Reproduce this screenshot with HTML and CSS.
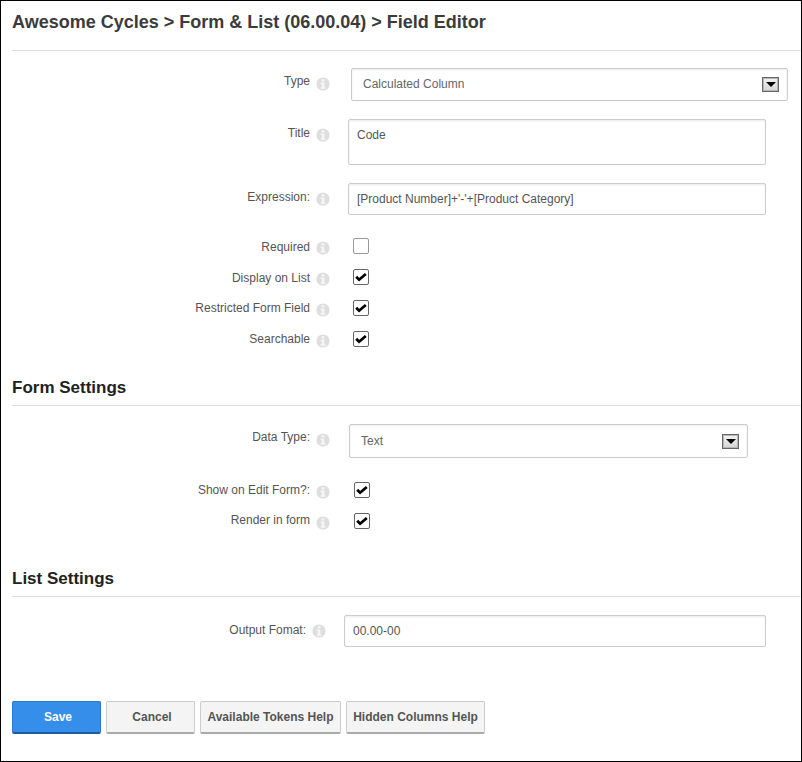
FILE: index.html
```html
<!DOCTYPE html>
<html lang="en">
<head>
    <meta charset="UTF-8">
    <meta name="viewport" content="width=device-width, initial-scale=1.0">
    <title>Field Editor</title>
    <link rel="stylesheet" href="styles.css">
</head>
<body>
    <svg class="sprites" width="0" height="0">
        <symbol id="info" viewBox="0 0 14 14">
            <circle cx="7" cy="7" r="6.6" fill="#dedede"/>
            <rect x="5.6" y="2.2" width="2.8" height="2.3" fill="#f6f6f6"/>
            <path d="M4.6 5.5h3.8v4.7h1.1v1.6H4.6v-1.6h1.1V7.1H4.6z" fill="#f6f6f6"/>
        </symbol>
        <symbol id="tick" viewBox="0 0 12 10">
            <path d="M1.2 4.8l2.9 2.9L10.8 2" fill="none" stroke="#000" stroke-width="2.8"/>
        </symbol>
    </svg>

    <div class="frame">
        <h1 class="page-title">Awesome Cycles &gt; Form &amp; List (06.00.04) &gt; Field Editor</h1>

        <div class="group group-main">
            <div class="row row-input">
                <label class="row-label">Type</label>
                <svg class="info"><use href="#info"/></svg>
                <div class="select select-type">Calculated Column<span class="arrow"></span></div>
            </div>
            <div class="row row-input row-title">
                <label class="row-label">Title</label>
                <svg class="info"><use href="#info"/></svg>
                <textarea class="field field-title">Code</textarea>
            </div>
            <div class="row row-input row-expression">
                <label class="row-label">Expression:</label>
                <svg class="info"><use href="#info"/></svg>
                <input class="field field-expression" type="text" value="[Product Number]+'-'+[Product Category]">
            </div>
            <div class="row row-check row-first">
                <label class="row-label">Required</label>
                <svg class="info"><use href="#info"/></svg>
                <span class="check"></span>
            </div>
            <div class="row row-check row-display">
                <label class="row-label">Display on List</label>
                <svg class="info"><use href="#info"/></svg>
                <span class="check"><svg class="tick"><use href="#tick"/></svg></span>
            </div>
            <div class="row row-check">
                <label class="row-label">Restricted Form Field</label>
                <svg class="info"><use href="#info"/></svg>
                <span class="check"><svg class="tick"><use href="#tick"/></svg></span>
            </div>
            <div class="row row-check">
                <label class="row-label">Searchable</label>
                <svg class="info"><use href="#info"/></svg>
                <span class="check"><svg class="tick"><use href="#tick"/></svg></span>
            </div>
        </div>

        <h2 class="section-title">Form Settings</h2>
        <div class="group group-form">
            <div class="row row-input">
                <label class="row-label">Data Type:</label>
                <svg class="info"><use href="#info"/></svg>
                <div class="select select-data">Text<span class="arrow"></span></div>
            </div>
            <div class="row row-check row-form row-first-form">
                <label class="row-label">Show on Edit Form?:</label>
                <svg class="info"><use href="#info"/></svg>
                <span class="check"><svg class="tick"><use href="#tick"/></svg></span>
            </div>
            <div class="row row-check row-form row-render">
                <label class="row-label">Render in form</label>
                <svg class="info"><use href="#info"/></svg>
                <span class="check"><svg class="tick"><use href="#tick"/></svg></span>
            </div>
        </div>

        <h2 class="section-title">List Settings</h2>
        <div class="group group-list">
            <div class="row row-input row-output">
                <label class="row-label">Output Fomat:</label>
                <svg class="info"><use href="#info"/></svg>
                <input class="field field-output" type="text" value="00.00-00">
            </div>
        </div>

        <div class="actions">
            <button class="btn btn-primary btn-wide">Save</button>
            <button class="btn btn-wide">Cancel</button>
            <button class="btn btn-tokens">Available Tokens Help</button>
            <button class="btn btn-hidden">Hidden Columns Help</button>
        </div>
    </div>
</body>
</html>
```

FILE: styles.css
```css
*{
    box-sizing: border-box;
}
html, body{
    margin: 0;
    padding: 0;
    background: #fff;
}
body{
    font-family: "Liberation Sans", Arial, sans-serif;
    font-size: 12px;
    color: #555;
}
.sprites{
    position: absolute;
}
.frame{
    width: 802px;
    height: 762px;
    border: 1px solid #000;
    padding-left: 11px;
    overflow: hidden;
}
.page-title{
    margin: 0;
    height: 50px;
    padding-top: 11px;
    font-size: 18px;
    line-height: 20px;
    font-weight: bold;
    color: #3b3b3b;
    border-bottom: 1px solid #ddd;
}
.section-title{
    margin: 0;
    height: 39px;
    padding-top: 11px;
    font-size: 17px;
    line-height: 20px;
    font-weight: bold;
    color: #222;
    border-bottom: 1px solid #ddd;
}
.group-main{
    height: 316px;
    padding-top: 17px;
}
.group-form{
    height: 152px;
    padding-top: 18px;
}
.group-list{
    height: 104px;
    padding-top: 18px;
}
.row{
    display: flex;
    align-items: flex-start;
}
.row-label{
    width: 298px;
    flex: none;
    text-align: right;
    line-height: 16px;
    color: #555;
}
.info{
    width: 14px;
    height: 14px;
    flex: none;
    margin-left: 6px;
    margin-top: 3px;
}
.row-input .row-label{
    padding-top: 5px;
}
.row-input .info{
    margin-top: 9px;
}
.row-title .row-label,
.row-expression .row-label,
.row-output .row-label{
    padding-top: 6px;
}
.row-output .row-label{
    width: 294px;
    padding-top: 7px;
}
.select{
    position: relative;
    height: 33px;
    border: 1px solid #ccc;
    border-radius: 2px;
    box-shadow: inset 0 1px 2px rgba(0,0,0,0.08);
    padding: 7px 11px;
    line-height: 16px;
    color: #666;
    background: #fff;
}
.arrow{
    position: absolute;
    top: 8px;
    right: 8px;
    width: 17px;
    height: 15px;
    border: 1px solid #666;
    box-shadow: inset 0 0 0 1px #b5b5b5;
    background: linear-gradient(#f4f4f4, #d4d4d4);
}
.arrow::after{
    content: "";
    position: absolute;
    left: 3px;
    top: 4px;
    border-left: 5px solid transparent;
    border-right: 5px solid transparent;
    border-top: 5px solid #000;
}
.select-type{
    width: 437px;
    margin-left: 21px;
}
.select-data{
    width: 399px;
    height: 34px;
    margin-left: 19px;
    padding-top: 8px;
}
.select-data .arrow{
    top: 9px;
}
.field{
    display: block;
    border: 1px solid #ccc;
    border-radius: 2px;
    box-shadow: inset 0 1px 2px rgba(0,0,0,0.08);
    padding: 7px 8px;
    margin: 0;
    font-family: inherit;
    font-size: 12px;
    line-height: 16px;
    color: #555;
    background: #fff;
    resize: none;
    outline: none;
}
.field-title{
    width: 418px;
    height: 46px;
    margin-left: 18px;
}
.field-expression{
    width: 418px;
    height: 32px;
    margin-left: 18px;
}
.field-output{
    width: 422px;
    height: 32px;
    margin-left: 18px;
}
.row-title{
    margin-top: 18px;
}
.row-expression{
    margin-top: 18px;
}
.row-check{
    margin-top: 15px;
    height: 16px;
}
.row-first{
    margin-top: 23px;
}
.row-first .row-label,
.row-display .row-label{
    padding-top: 1px;
}
.row-first-form{
    margin-top: 24px;
}
.row-render .row-label{
    margin-top: -1px;
}
.check{
    width: 16px;
    height: 16px;
    flex: none;
    display: flex;
    align-items: center;
    justify-content: center;
    margin-left: 23px;
    border: 1px solid #666;
    border-radius: 2px;
    background: #fff;
}
.row-first .check{
    border-color: #999;
}
.row-form .check{
    margin-left: 24px;
}
.tick{
    width: 12px;
    height: 10px;
}
.actions{
    display: flex;
    gap: 5px;
}
.btn{
    height: 33px;
    padding: 0;
    font-family: inherit;
    font-size: 12px;
    font-weight: bold;
    color: #555;
    background: #f4f4f4;
    border: 1px solid #ccc;
    border-bottom: 2px solid #aaa;
    border-radius: 2px;
}
.btn-wide{
    width: 89px;
    padding-left: 3px;
}
.btn-tokens{
    width: 141px;
}
.btn-hidden{
    width: 139px;
}
.btn-primary{
    color: #fff;
    background: #348eea;
    border-color: #2a78c8;
    border-bottom-color: #1c5c9c;
}
```
